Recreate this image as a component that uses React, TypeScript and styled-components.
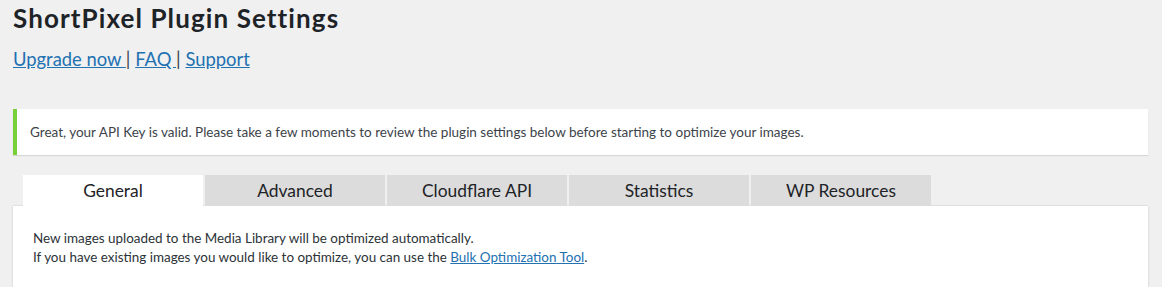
import React from "react";
import styled, { createGlobalStyle } from "styled-components";

const GlobalStyle = createGlobalStyle`
  html, body {
    margin: 0;
    padding: 0;
    background: #f0f0f1;
  }
  body {
    font-family: Lato, "Liberation Sans", sans-serif;
    color: #3c434a;
  }
`;

const tabs = ["General", "Advanced", "Cloudflare API", "Statistics", "WP Resources"];

export default function App() {
  return (
    <>
      <GlobalStyle />
      <Wrap>
        <Title>ShortPixel Plugin Settings</Title>
        <TopLinks>
          <a href="#">Upgrade now </a>| <a href="#">FAQ </a>| <a href="#">Support</a>
        </TopLinks>
        <Notice>
          <p>
            Great, your API Key is valid. Please take a few moments to review the plugin settings
            below before starting to optimize your images.
          </p>
        </Notice>
        <TabBar>
          {tabs.map((t, i) => (
            <Tab key={t} $active={i === 0}>
              {t}
            </Tab>
          ))}
        </TabBar>
        <Panel>
          <p>New images uploaded to the Media Library will be optimized automatically.</p>
          <p>
            If you have existing images you would like to optimize, you can use the{" "}
            <a href="#">Bulk Optimization Tool</a>.
          </p>
        </Panel>
      </Wrap>
    </>
  );
}

const Wrap = styled.div`
  padding: 0 14px 0 13px;
  height: 287px;
  overflow: hidden;
`;

const Title = styled.h1`
  margin: 0;
  padding-top: 3px;
  font-size: 26px;
  line-height: 30px;
  font-weight: 700;
  letter-spacing: 1.1px;
  color: #1d2327;
`;

const TopLinks = styled.div`
  margin-top: 13px;
  font-size: 18.4px;
  line-height: 26px;
  color: #3c434a;

  a {
    color: #2271b1;
    text-decoration: underline;
  }
`;

const Notice = styled.div`
  margin-top: 37px;
  background: #fff;
  border-left: 4px solid #7ad03a;
  box-shadow: 0 1px 1px rgba(0, 0, 0, 0.1);
  padding: 0 13px;
  height: 46px;
  display: flex;
  align-items: center;

  p {
    margin: 0;
    font-size: 13.5px;
    line-height: 19px;
    color: #3c434a;
  }
`;

const TabBar = styled.div`
  display: flex;
  gap: 2px;
  margin-top: 20px;
  padding-left: 10px;
`;

const Tab = styled.div<{ $active: boolean }>`
  width: 180px;
  height: 31px;
  display: flex;
  align-items: center;
  justify-content: center;
  font-size: 17.4px;
  color: #1d2327;
  background: ${(p) => (p.$active ? "#fff" : "#dcdcdc")};
`;

const Panel = styled.div`
  background: #fff;
  box-shadow: 0 0 2px rgba(0, 0, 0, 0.2);
  padding: 23px 20px 30px;
  height: 100px;

  p {
    margin: 0;
    font-size: 13.45px;
    line-height: 19px;
    color: #2c3338;
  }

  a {
    color: #2271b1;
    text-decoration: underline;
  }
`;
